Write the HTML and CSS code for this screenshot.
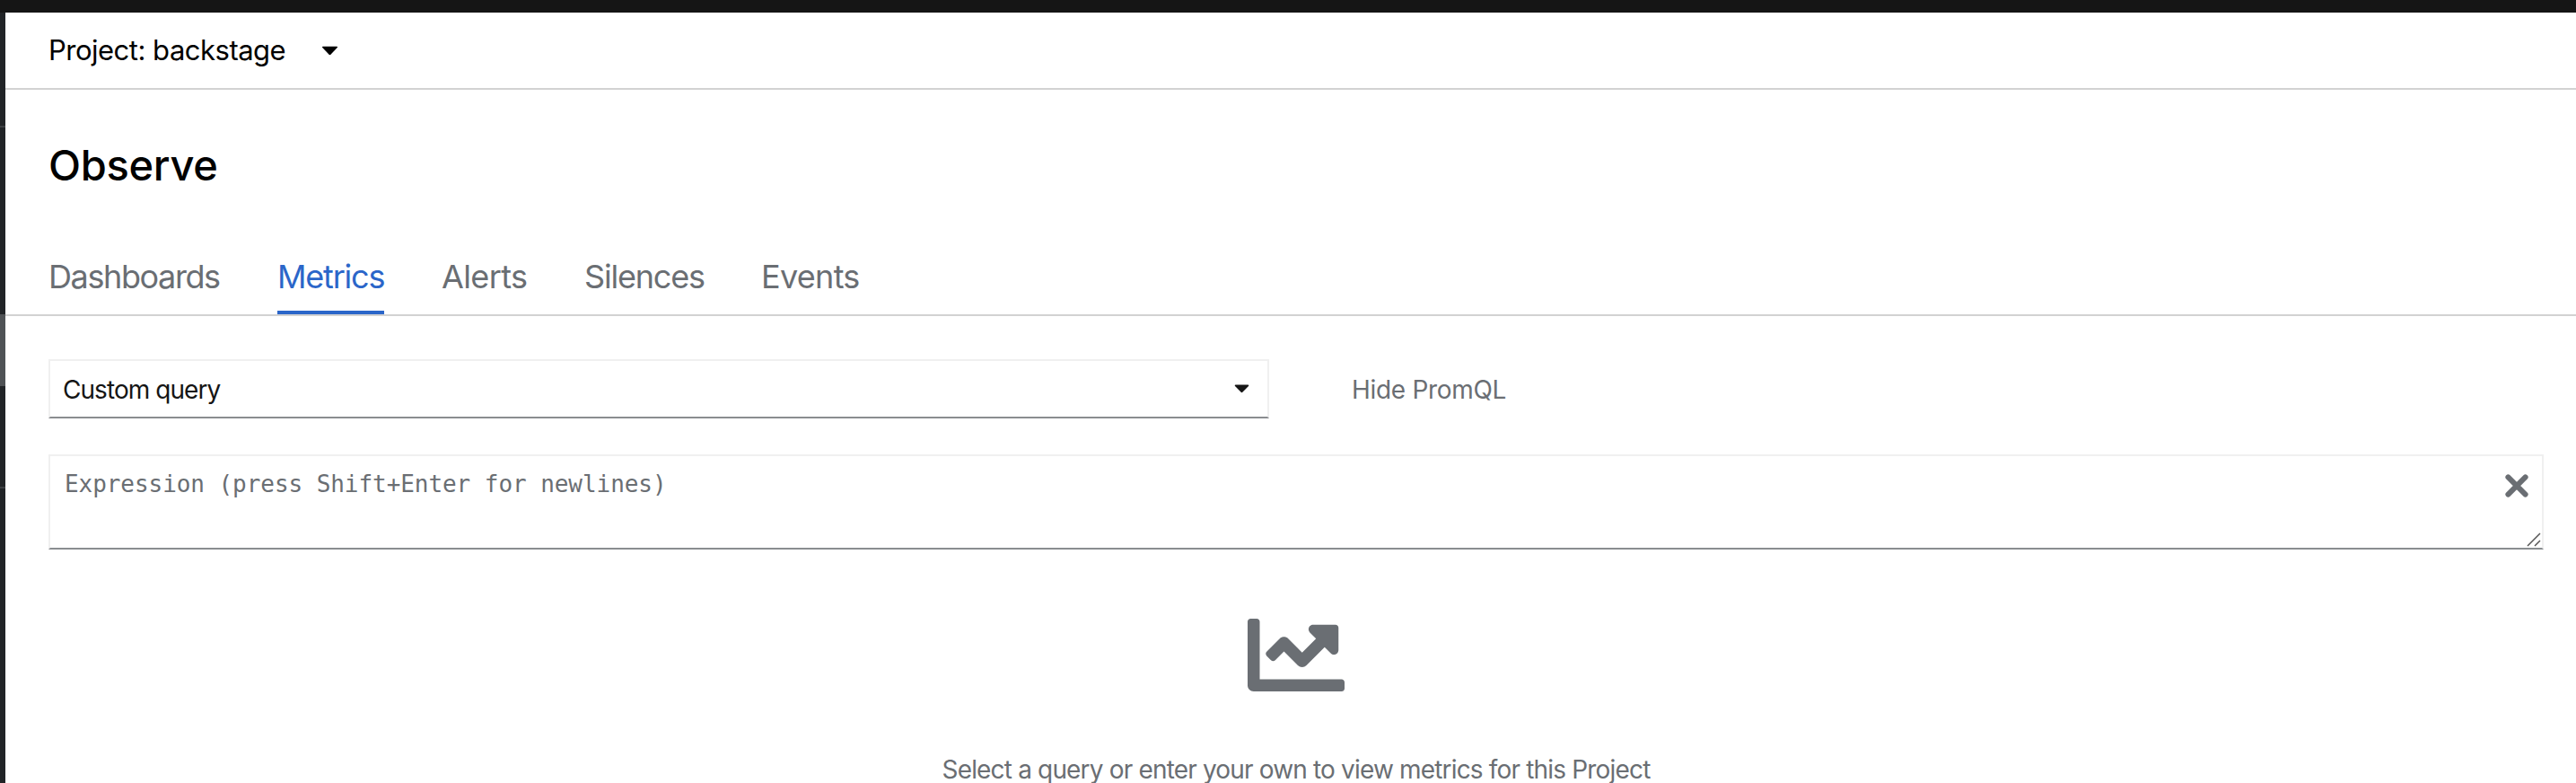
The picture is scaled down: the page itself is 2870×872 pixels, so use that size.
FILE: index.html
```html
<!DOCTYPE html>
<html lang="en">
<head>
<meta charset="utf-8">
<title>Observe - Metrics</title>
<link rel="stylesheet" href="styles.css">
</head>
<body>
<header class="masthead"></header>
<div class="shell">
  <aside class="sidebar">
    <div class="nav-group first"></div>
    <div class="nav-group second"></div>
    <div class="nav-current"></div>
    <div class="nav-group third"></div>
    <div class="nav-group last"></div>
  </aside>
  <main class="content">
    <div class="project-bar">
      <span class="project-name">Project: backstage</span>
      <svg class="caret" viewBox="0 0 20 12"><path d="M1.6 0.7H18.4Q20.2 0.9 19 2.3L11 10.6Q10 11.6 9 10.6L1 2.3Q-0.2 0.9 1.6 0.7Z"/></svg>
    </div>
    <h1 class="title">Observe</h1>
    <nav class="tabs">
      <a class="tab t-dashboards">Dashboards</a>
      <a class="tab t-metrics current">Metrics</a>
      <a class="tab t-alerts">Alerts</a>
      <a class="tab t-silences">Silences</a>
      <a class="tab t-events">Events</a>
    </nav>
    <section class="query">
      <div class="query-row">
        <div class="select">
          <span class="select-text">Custom query</span>
          <svg class="caret small" viewBox="0 0 20 12"><path d="M1.6 0.7H18.4Q20.2 0.9 19 2.3L11 10.6Q10 11.6 9 10.6L1 2.3Q-0.2 0.9 1.6 0.7Z"/></svg>
        </div>
        <span class="hide-link">Hide PromQL</span>
      </div>
      <div class="expression">
        <span class="placeholder">Expression (press Shift+Enter for newlines)</span>
        <svg class="clear" viewBox="0 0 26 26"><path d="M3.4 3.4L22.6 22.6M22.6 3.4L3.4 22.6"/></svg>
        <svg class="grip" viewBox="0 0 16 16"><path d="M1 15L15 1M9 15L15 9"/></svg>
      </div>
      <div class="empty">
        <svg class="chart-icon" viewBox="0 64 512 384"><path d="M496 384H64V80c0-8.840-7.160-16-16-16H16C7.160 64 0 71.160 0 80v336c0 17.670 14.330 32 32 32h464c8.840 0 16-7.160 16-16v-32c0-8.840-7.160-16-16-16zM464 96H345.940c-21.380 0-32.090 25.850-16.970 40.970l32.400 32.400L288 242.750l-73.370-73.370c-12.500-12.500-32.760-12.500-45.250 0l-68.690 68.690c-6.250 6.250-6.250 16.380 0 22.630l22.620 22.620c6.250 6.250 16.380 6.250 22.630 0L192 237.250l73.370 73.370c12.500 12.500 32.760 12.500 45.250 0l96-96 32.400 32.400c15.120 15.120 40.970 4.410 40.970-16.970V112c.010-8.840-7.150-16-15.990-16z"/></svg>
        <p class="empty-text">Select a query or enter your own to view metrics for this Project</p>
      </div>
    </section>
  </main>
</div>
</body>
</html>
```
FILE: styles.css
```css
* { box-sizing: border-box; }
body {
  margin: 0;
  height: 872px;
  overflow: hidden;
  background: #fff;
  color: #000;
  font-family: Inter, "Liberation Sans", sans-serif;
  white-space: nowrap;
}
.masthead { height: 14px; background: #151515; }
.shell { display: flex; height: 858px; }
.sidebar { width: 6px; flex: none; background: #212427; }
.nav-group { border-bottom: 2px solid #3c3f42; }
.first { height: 128px; }
.second { height: 208px; border: 0; }
.nav-current { height: 80px; background: #4f5255; }
.third { height: 114px; }
.last { border: 0; }
.content { flex: 1; min-width: 0; }
.project-bar {
  height: 86px;
  padding: 0 48px;
  border-bottom: 2px solid #d2d2d2;
  display: flex;
  align-items: center;
}
.project-name { width: 304px; font-size: 31px; line-height: 40px; letter-spacing: -0.5px; }
.caret { width: 19px; height: 11px; display: block; fill: #000; }
.caret.small { width: 17px; height: 10px; fill: #151515; }
.title {
  margin: 0;
  padding: 56px 48px 0;
  height: 176px;
  font-size: 47px;
  line-height: 56px;
  font-weight: 500;
  letter-spacing: -0.3px;
}
.tabs {
  height: 76px;
  padding: 0 48px;
  display: flex;
  gap: 64px;
  border-bottom: 2px solid #d2d2d2;
}
.tab {
  height: 74px;
  padding-top: 8px;
  font-size: 36px;
  line-height: 48px;
  color: #6a6e73;
}
.current { color: #2b66c9; border-bottom: 4px solid #2b66c9; }
.t-dashboards { width: 191px; letter-spacing: -1.4px; }
.t-metrics { width: 119px; letter-spacing: -1.2px; }
.t-alerts { width: 95px; letter-spacing: -0.6px; }
.t-silences { width: 133px; letter-spacing: -1.2px; }
.t-events { letter-spacing: -0.7px; }
.query { padding: 48px 36px 0 48px; }
.query-row { display: flex; align-items: center; gap: 92px; }
.select {
  width: 1360px;
  height: 66px;
  padding: 0 20px 0 14px;
  border: 2px solid #f0f0f0;
  border-bottom-color: #8a8d90;
  display: flex;
  justify-content: space-between;
  align-items: center;
}
.select-text { padding-top: 2px; font-size: 28px; line-height: 36px; letter-spacing: -0.95px; color: #151515; }
.hide-link { padding-top: 2px; font-size: 28px; line-height: 36px; letter-spacing: -0.3px; color: #6a6e73; }
.expression {
  position: relative;
  height: 106px;
  margin-top: 40px;
  padding: 13px 16px;
  border: 2px solid #f0f0f0;
  border-bottom-color: #8a8d90;
}
.placeholder {
  font-family: "DejaVu Sans Mono", monospace;
  font-size: 26px;
  line-height: 36px;
  letter-spacing: -0.06px;
  color: #6a6e73;
}
.clear {
  position: absolute;
  right: 15px;
  top: 20px;
  width: 26px;
  height: 26px;
  stroke: #6a6e73;
  stroke-width: 6;
  stroke-linecap: round;
}
.grip {
  position: absolute;
  right: 1px;
  bottom: 1px;
  width: 16px;
  height: 16px;
  stroke: #555;
  stroke-width: 1.5;
}
.empty { display: flex; flex-direction: column; align-items: center; padding-top: 77px; }
.chart-icon { width: 108px; height: 81px; display: block; fill: #6a6e73; }
.empty-text { margin: 69px 0 0; font-size: 28px; line-height: 36px; letter-spacing: -0.83px; color: #6a6e73; }
```
